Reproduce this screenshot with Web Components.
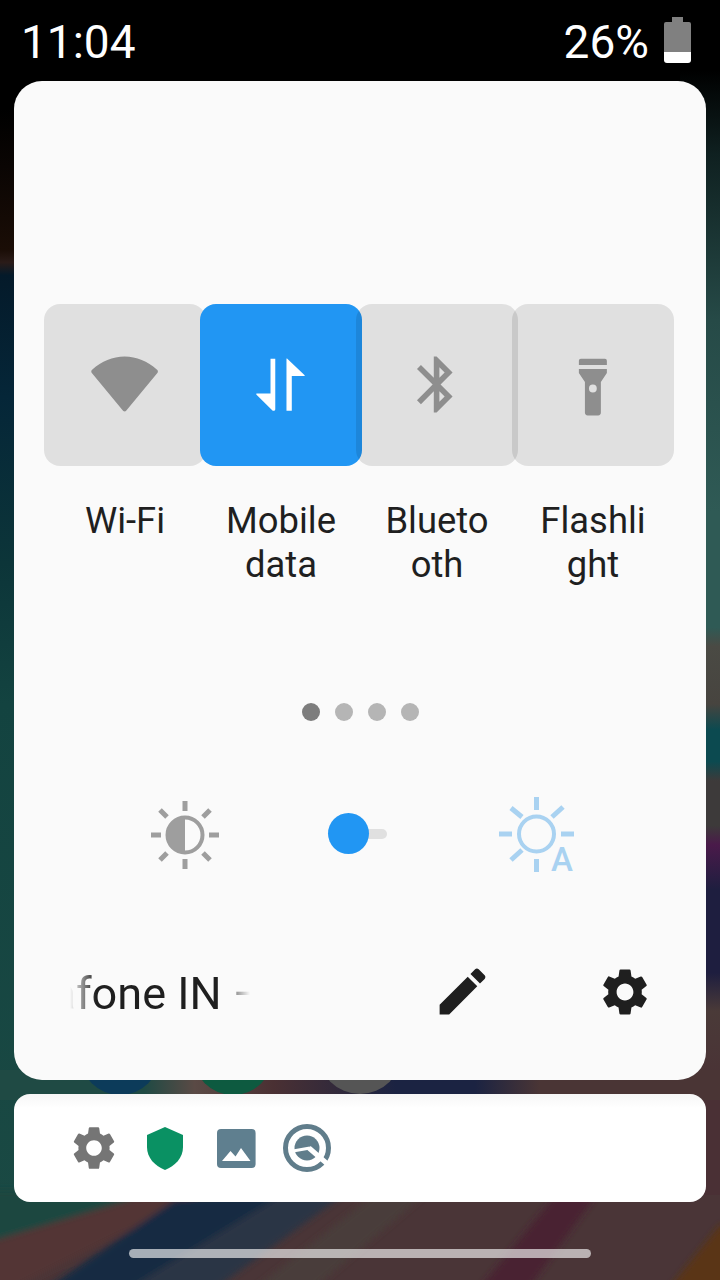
<!DOCTYPE html>
<html>
<head>
<meta charset="utf-8">
<title>Quick settings</title>
<style>
  html, body { margin: 0; padding: 0; background: #000; }
  body { width: 720px; height: 1280px; overflow: hidden; font-family: Roboto, "Liberation Sans", sans-serif; }
  x-phone { display: block; }
</style>
</head>
<body>
<x-phone>
  <status-bar time="11:04" level="26%"></status-bar>
  <qs-panel>
    <qs-tile label="Wi-Fi">
      <svg viewBox="0 0 24 24" width="67.2" height="67.2"><path fill="#8e8e8e" d="M12 21.6c-.3 0-.5-.1-.7-.4L.3 7.9c-.3-.4-.3-1 .2-1.3C3.8 3.8 7.7 2 12 2s8.2 1.8 11.5 4.6c.5.3.5.9.2 1.3L12.7 21.2c-.2.3-.4.4-.7.4z"/></svg>
    </qs-tile>
    <qs-tile label="Mobile data" active>
      <svg viewBox="0 0 24 24" width="67.2" height="67.2"><path fill="#fff" d="M3.600 15.200H8.400V2.800H10.100V20.800c0 .5-.7.8-1.100.4L3.400 15.600c-.2-.2-.1-.4.2-.4z M14.100 2.800c0-.1.1-.2.2-.1L20.600 8.700c.1.1 0 .2-.1.2H16V21.300H14.100z"/></svg>
    </qs-tile>
    <qs-tile label="Bluetooth">
      <svg viewBox="0 0 24 24" width="67.2" height="67.2"><path fill="#8e8e8e" d="M17.71 7.71L12 2h-1v7.59L6.41 5 5 6.41 10.59 12 5 17.59 6.41 19 11 14.41V22h1l5.710-5.710-4.300-4.290 4.300-4.290zM13 5.830l1.880 1.880L13 9.590V5.830zm1.880 10.460L13 18.170v-3.760l1.880 1.880z"/></svg>
    </qs-tile>
    <qs-tile label="Flashlight">
      <svg viewBox="0 0 24 24" width="67.2" height="67.2"><path fill="#8e8e8e" fill-rule="evenodd" d="M7.800 2.800h8.600a.7.7 0 0 1 .7.7v1.500H7.100V3.500a.7.7 0 0 1 .7-.7z M7.100 6.400h10v1.500l-2.140 3.200V22a1 1 0 0 1-1 1h-3.700a1 1 0 0 1-1-1V11.100L7.100 7.900z M12.100 12a1.400 1.400 0 1 0 0 2.800 1.400 1.400 0 0 0 0-2.800z"/></svg>
    </qs-tile>
  </qs-panel>
  <notif-shelf></notif-shelf>
  <home-bar></home-bar>
</x-phone>

<script>
const gearPath = 'M19.14 12.94c.04-.3.06-.61.06-.94 0-.32-.02-.64-.07-.94l2.03-1.58c.18-.14.23-.41.12-.61l-1.92-3.32c-.12-.22-.37-.29-.59-.22l-2.39.96c-.5-.38-1.03-.7-1.62-.94l-.36-2.54c-.04-.24-.24-.41-.48-.41h-3.84c-.24 0-.43.17-.47.41l-.36 2.54c-.59.24-1.13.57-1.62.94l-2.39-.96c-.22-.08-.47 0-.59.22L2.74 8.87c-.12.21-.08.47.12.61l2.03 1.58c-.05.3-.09.63-.09.94s.02.64.07.94l-2.03 1.58c-.18.14-.23.41-.12.61l1.92 3.32c.12.22.37.29.59.22l2.39-.96c.5.38 1.03.7 1.62.94l.36 2.54c.05.24.24.41.48.41h3.84c.24 0 .44-.17.47-.41l.36-2.54c.59-.24 1.13-.56 1.62-.94l2.39.96c.22.08.47 0 .59-.22l1.92-3.32c.12-.22.07-.47-.12-.61l-2.01-1.58zM12 15.6c-1.98 0-3.6-1.62-3.6-3.6s1.62-3.6 3.6-3.6 3.6 1.62 3.6 3.6-1.62 3.6-3.6 3.6z'

class XPhone extends HTMLElement {
  constructor() {
    super()
    this.attachShadow({ mode: 'open' })
    this.shadowRoot.innerHTML = `
      <style>
        :host { display: block; position: relative; width: 720px; height: 1280px; overflow: hidden; }
        .wall { position: absolute; left: 0; top: 0; }
        .content { position: relative; display: flex; flex-direction: column; }
      </style>
      <svg class="wall" width="720" height="1280" viewBox="0 0 720 1280">
        <defs>
          <linearGradient id="left" gradientUnits="userSpaceOnUse" x1="0" y1="0" x2="0" y2="1280">
            <stop offset="0.085" stop-color="#000"/>
            <stop offset="0.13" stop-color="#0a0503"/>
            <stop offset="0.195" stop-color="#1a0d06"/>
            <stop offset="0.205" stop-color="#2a1b18"/>
            <stop offset="0.215" stop-color="#041a2a"/>
            <stop offset="0.31" stop-color="#052638"/>
            <stop offset="0.44" stop-color="#0c3539"/>
            <stop offset="0.55" stop-color="#134340"/>
            <stop offset="1" stop-color="#1b4a44"/>
          </linearGradient>
          <linearGradient id="right" gradientUnits="userSpaceOnUse" x1="0" y1="0" x2="0" y2="1280">
            <stop offset="0.055" stop-color="#000"/>
            <stop offset="0.12" stop-color="#0f2020"/>
            <stop offset="0.25" stop-color="#264a47"/>
            <stop offset="0.4" stop-color="#2f5a55"/>
            <stop offset="0.49" stop-color="#2f5a55"/>
            <stop offset="0.505" stop-color="#4a4a44"/>
            <stop offset="0.55" stop-color="#47443f"/>
            <stop offset="0.57" stop-color="#0c4a50"/>
            <stop offset="0.595" stop-color="#0c4a50"/>
            <stop offset="0.61" stop-color="#3d3a3a"/>
            <stop offset="0.645" stop-color="#3d3a3a"/>
            <stop offset="0.66" stop-color="#4a1a4a"/>
            <stop offset="0.695" stop-color="#1e1e3f"/>
            <stop offset="0.76" stop-color="#1e1e3f"/>
            <stop offset="0.79" stop-color="#4a3a38"/>
            <stop offset="0.86" stop-color="#4a3035"/>
            <stop offset="1" stop-color="#4a3035"/>
          </linearGradient>
          <linearGradient id="gap" gradientUnits="userSpaceOnUse" x1="0" y1="0" x2="720" y2="0">
            <stop offset="0" stop-color="#1f4a44"/>
            <stop offset="0.2" stop-color="#1f4a44"/>
            <stop offset="0.27" stop-color="#5a4a45"/>
            <stop offset="0.38" stop-color="#4a3033"/>
            <stop offset="0.55" stop-color="#1b2342"/>
            <stop offset="0.66" stop-color="#1b2342"/>
            <stop offset="0.75" stop-color="#4a3535"/>
            <stop offset="1" stop-color="#4a3535"/>
          </linearGradient>
          <filter id="soft" x="-10%" y="-10%" width="120%" height="120%"><feGaussianBlur stdDeviation="3"/></filter>
        </defs>
        <rect width="720" height="1280" fill="#000"/>
        <rect x="0" y="60" width="40" height="1140" fill="url(#left)"/>
        <rect x="680" y="0" width="40" height="1200" fill="url(#right)"/>
        <rect x="0" y="1070" width="720" height="30" fill="url(#gap)"/>
        <circle cx="120" cy="1055" r="40" fill="#0c3b5a"/>
        <circle cx="233" cy="1055" r="40" fill="#0d5a40"/>
        <circle cx="360" cy="1052" r="42" fill="#555"/>
        <rect x="0" y="1195" width="720" height="85" fill="#4a3537"/>
        <g filter="url(#soft)">
          <polygon points="-10,1190 130,1190 130,1200 -10,1242" fill="#1a4640"/>
          <polygon points="-10,1242 130,1200 210,1190 -10,1300" fill="#523536"/>
          <polygon points="30,1300 175,1200 290,1190 110,1300" fill="#182a42"/>
          <polygon points="110,1300 290,1190 350,1190 200,1300" fill="#2a3644"/>
          <polygon points="240,1300 380,1190 430,1190 300,1300" fill="#4a3e3a"/>
          <polygon points="470,1300 560,1190 600,1190 520,1300" fill="#482132"/>
          <polygon points="660,1300 720,1225 740,1225 740,1300" fill="#5a3412"/>
        </g>
      </svg>
      <div class="content"><slot></slot></div>
    `
  }
}

class StatusBar extends HTMLElement {
  constructor() {
    super()
    this.attachShadow({ mode: 'open' })
    this.shadowRoot.innerHTML = `
      <style>
        :host { display: flex; align-items: center; height: 81px; padding: 0 29px 0 21px; box-sizing: border-box; color: #fff; font: 400 46px/81px Roboto, sans-serif; }
        .right { margin-left: auto; display: flex; align-items: center; gap: 15px; }
        .time, .level { padding-top: 4px; }
        svg { display: block; margin-bottom: 1px; }
      </style>
      <span class="time"></span>
      <div class="right">
        <span class="level"></span>
        <svg width="27" height="46" viewBox="0 0 27 46">
          <path fill="#808080" d="M8 0h11v5h6a2 2 0 0 1 2 2v28H0V7a2 2 0 0 1 2-2h6z"/>
          <path fill="#fff" d="M0 35h27v8a3 3 0 0 1-3 3H3a3 3 0 0 1-3-3z"/>
        </svg>
      </div>
    `
    this.shadowRoot.querySelector('.time').textContent = this.getAttribute('time')
    this.shadowRoot.querySelector('.level').textContent = this.getAttribute('level')
  }
}

class QsTile extends HTMLElement {
  constructor() {
    super()
    this.attachShadow({ mode: 'open' })
    this.shadowRoot.innerHTML = `
      <style>
        :host { display: block; width: 162px; flex: none; margin-left: -6px; }
        :host(:first-child) { margin-left: 0; }
        .box { height: 162px; border-radius: 16px; background: rgba(0, 0, 0, 0.1); display: flex; align-items: center; justify-content: center; }
        :host([active]) .box { background: #2196f3; }
        .label { margin-top: 33px; padding: 0 24px; height: 87px; font: 400 36.4px/44px Roboto, sans-serif; color: #1f1f1f; text-align: center; overflow-wrap: anywhere; }
      </style>
      <div class="box"><slot></slot></div>
      <div class="label"></div>
    `
    this.shadowRoot.querySelector('.label').textContent = this.getAttribute('label')
  }
}

class PageDots extends HTMLElement {
  constructor() {
    super()
    this.attachShadow({ mode: 'open' })
    this.shadowRoot.innerHTML = `
      <style>
        :host { display: flex; justify-content: center; gap: 15px; }
        i { width: 18px; height: 18px; border-radius: 50%; background: #b5b5b5; }
        i:first-of-type { background: #7d7d7d; }
      </style>
      <i></i><i></i><i></i><i></i>
    `
  }
}

class BrightnessRow extends HTMLElement {
  constructor() {
    super()
    this.attachShadow({ mode: 'open' })
    this.shadowRoot.innerHTML = `
      <style>
        :host { display: flex; align-items: center; padding-left: 136.5px; }
        svg { display: block; flex: none; }
        .slider { position: relative; flex: none; width: 59px; height: 41px; margin: -2px 112px 0 109.5px; }
        .track { position: absolute; left: 20px; right: 0; top: 15.500px; height: 10px; border-radius: 5px; background: #e0e0e0; }
        .thumb { position: absolute; left: 0; top: 0; width: 41px; height: 41px; border-radius: 50%; background: #2196f3; }
        .auto { position: relative; flex: none; width: 75px; height: 75px; }
        .auto span { position: absolute; right: 1px; bottom: 0; font: 500 33px/24px Roboto, sans-serif; color: #a9d2f1; }
      </style>
      <svg width="68" height="68" viewBox="-34 -34 68 68">
        <g stroke="#9e9e9e" stroke-width="5">
          <path d="M0-34V-24M0 34V24M-34 0H-24M34 0H24M-25-25L-18-18M25-25L18-18M-25 25L-18 18M25 25L18 18"/>
        </g>
        <circle r="17.500" fill="none" stroke="#9e9e9e" stroke-width="4"/>
        <path fill="#9e9e9e" d="M0-18A18 18 0 0 0 0 18z"/>
      </svg>
      <div class="slider"><div class="track"></div><div class="thumb"></div></div>
      <div class="auto">
        <svg width="75" height="75" viewBox="0 0 75 75">
          <g stroke="#a9d2f1" stroke-width="5">
            <path d="M37.500 0V13M37.500 62V75M0 37H13M62 37H75M12 11L23 20M64 10L53 20M12 63L23 53"/>
          </g>
          <circle cx="37.500" cy="37" r="17.500" fill="none" stroke="#a9d2f1" stroke-width="4"/>
        </svg>
        <span>A</span>
      </div>
    `
  }
}

class QsFooter extends HTMLElement {
  constructor() {
    super()
    this.attachShadow({ mode: 'open' })
    this.shadowRoot.innerHTML = `
      <style>
        :host { display: flex; align-items: center; padding-left: 56px; height: 61px; color: #1f1f1f; }
        .carrier {
          flex: none; width: 182px; overflow: hidden; white-space: nowrap; text-indent: -18.500px; padding-top: 4px;
          font: 400 45px/61px Roboto, sans-serif;
          -webkit-mask-image: linear-gradient(90deg, transparent 0, #000 26px, #000 150px, transparent 180px);
          mask-image: linear-gradient(90deg, transparent 0, #000 26px, #000 150px, transparent 180px);
        }
        svg { display: block; flex: none; }
        .edit { margin-left: 180.400px; }
        .gear { margin-left: 103.600px; }
      </style>
      <div class="carrier">afone IN –</div>
      <svg class="edit" width="61" height="61" viewBox="0 0 24 24"><path fill="#1f1f1f" d="M3 17.250V21h3.750L17.810 9.940l-3.750-3.750L3 17.250zM20.710 7.040c.39-.39.39-1.020 0-1.410l-2.340-2.340c-.39-.39-1.020-.39-1.410 0l-1.830 1.830 3.750 3.750 1.830-1.830z"/></svg>
      <svg class="gear" width="56" height="56" viewBox="0 0 24 24"><path fill="#1f1f1f" d="${gearPath}"/></svg>
    `
  }
}

class QsPanel extends HTMLElement {
  constructor() {
    super()
    this.attachShadow({ mode: 'open' })
    this.shadowRoot.innerHTML = `
      <style>
        :host { display: block; margin: 0 14px; height: 999px; box-sizing: border-box; padding-top: 223px; border-radius: 28px; background: #fafafa; }
        .tiles { display: flex; padding-left: 30px; }
        page-dots { margin-top: 117px; }
        brightness-row { margin-top: 76px; }
        qs-footer { margin-top: 89px; }
      </style>
      <div class="tiles"><slot></slot></div>
      <page-dots></page-dots>
      <brightness-row></brightness-row>
      <qs-footer></qs-footer>
    `
  }
}

class NotifShelf extends HTMLElement {
  constructor() {
    super()
    this.attachShadow({ mode: 'open' })
    this.shadowRoot.innerHTML = `
      <style>
        :host { display: flex; align-items: center; margin: 14px 14px 0; height: 108px; box-sizing: border-box; padding-left: 54px; border-radius: 16px; background: linear-gradient(#f6f6f6, #fff 14px); }
        svg { display: block; flex: none; }
        .shield { margin-left: 27px; }
        .image { margin-left: 33.700px; }
        .q { margin-left: 27.700px; }
      </style>
      <svg width="52" height="52" viewBox="0 0 24 24"><path fill="#757575" d="${gearPath}"/></svg>
      <svg class="shield" width="36" height="43" viewBox="0 0 36 43"><path fill="#0a9163" d="M18 0L36 8V20C36 31 28 39 18 43C8 39 0 31 0 20V8Z"/></svg>
      <svg class="image" width="39" height="39" viewBox="0 0 39 39"><rect width="38.600" height="39" rx="4" fill="#5f7f8f"/><path fill="#fff" d="M5 32L13.500 22L18.500 27.500L24 19L33.500 32Z"/></svg>
      <svg class="q" width="48" height="48" viewBox="-24 -24 48 48">
        <circle r="21.500" fill="none" stroke="#607d8b" stroke-width="5"/>
        <circle r="12.500" fill="#607d8b"/>
        <path d="M-14 3L3 0" stroke="#fff" stroke-width="3" fill="none"/>
        <path d="M2 0L24 19" stroke="#fff" stroke-width="5" fill="none"/>
      </svg>
    `
  }
}

class HomeBar extends HTMLElement {
  constructor() {
    super()
    this.attachShadow({ mode: 'open' })
    this.shadowRoot.innerHTML = `
      <style>
        :host { display: block; width: 462px; height: 9px; margin: 47px auto 0; border-radius: 4.500px; background: rgba(255, 255, 255, 0.62); }
      </style>
    `
  }
}

customElements.define('qs-tile', QsTile)
customElements.define('page-dots', PageDots)
customElements.define('brightness-row', BrightnessRow)
customElements.define('qs-footer', QsFooter)
customElements.define('qs-panel', QsPanel)
customElements.define('status-bar', StatusBar)
customElements.define('notif-shelf', NotifShelf)
customElements.define('home-bar', HomeBar)
customElements.define('x-phone', XPhone)
</script>
</body>
</html>
